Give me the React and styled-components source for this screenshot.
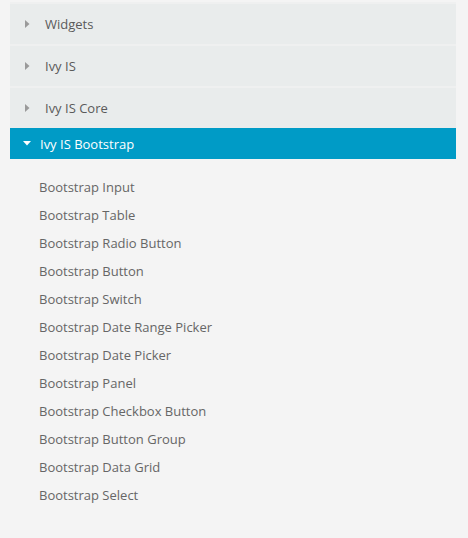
import React from 'react';
import styled, { createGlobalStyle } from 'styled-components';

const sections = [
  { title: 'Widgets' },
  { title: 'Ivy IS' },
  { title: 'Ivy IS Core' },
  {
    title: 'Ivy IS Bootstrap',
    open: true,
    items: [
      'Bootstrap Input',
      'Bootstrap Table',
      'Bootstrap Radio Button',
      'Bootstrap Button',
      'Bootstrap Switch',
      'Bootstrap Date Range Picker',
      'Bootstrap Date Picker',
      'Bootstrap Panel',
      'Bootstrap Checkbox Button',
      'Bootstrap Button Group',
      'Bootstrap Data Grid',
      'Bootstrap Select',
    ],
  },
];

const Caret = ({ open }) =>
  open ? (
    <svg width="8" height="5" viewBox="0 0 8 5">
      <path d="M0 0 L8 0 L4 4.5 Z" fill="#fff" />
    </svg>
  ) : (
    <svg width="5" height="8" viewBox="0 0 5 8">
      <path d="M0 0 L4.5 4 L0 8 Z" fill="#9a9a9a" />
    </svg>
  );

export default function App() {
  return (
    <>
      <GlobalStyle />
      <Sidebar>
        {sections.map((s) => (
          <Section key={s.title}>
            <Header $open={s.open}>
              <CaretBox $open={s.open}>
                <Caret open={s.open} />
              </CaretBox>
              {s.title}
            </Header>
            {s.open && (
              <List>
                {s.items.map((item) => (
                  <Item key={item}>{item}</Item>
                ))}
              </List>
            )}
          </Section>
        ))}
      </Sidebar>
    </>
  );
}

// STYLES --------------------------------

const GlobalStyle = createGlobalStyle`
  html, body {
    margin: 0;
    background: #f4f4f4;
    font-family: "Open Sans", "Liberation Sans", sans-serif;
  }
`;

const Sidebar = styled.nav`
  display: flex;
  flex-direction: column;
  padding: 2px 12px 0 10px;
`;

const Section = styled.div`
  display: flex;
  flex-direction: column;
`;

const Header = styled.div`
  display: flex;
  align-items: center;
  box-sizing: border-box;
  height: ${(p) => (p.$open ? '31px' : '42px')};
  border-top: ${(p) => (p.$open ? 'none' : '2px solid #eff0f0')};
  padding-left: ${(p) => (p.$open ? '13px' : '15px')};
  background: ${(p) => (p.$open ? '#009bc6' : '#e9ecec')};
  color: ${(p) => (p.$open ? '#ffffff' : '#5a5a5a')};
  font-size: 13px;
  cursor: pointer;
`;

const CaretBox = styled.span`
  display: flex;
  align-items: center;
  justify-content: center;
  width: ${(p) => (p.$open ? '8px' : '5px')};
  margin-right: ${(p) => (p.$open ? '9px' : '15px')};
`;

const List = styled.ul`
  list-style: none;
  margin: 0;
  padding: 14px 0 0 29px;
`;

const Item = styled.li`
  height: 28px;
  line-height: 28px;
  font-size: 13px;
  color: #666666;
`;
